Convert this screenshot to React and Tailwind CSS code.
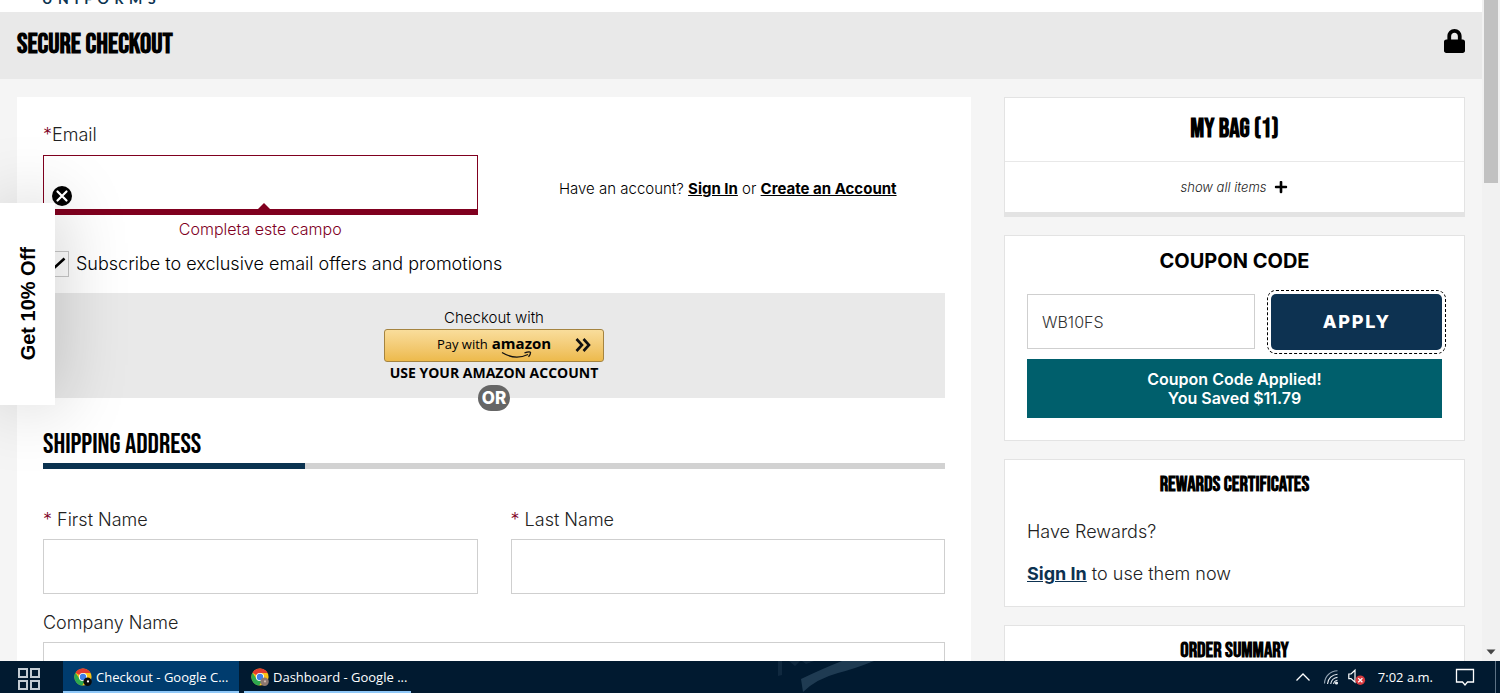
import React from "react";
import { FaLock, FaPlus } from "react-icons/fa";

const display = "font-['Bebas_Neue','Liberation_Sans_Narrow','Liberation_Sans',sans-serif]";
const card = "border border-[#e3e3e3] bg-white";
const field = "h-[55px] w-full min-w-0 rounded-none border border-[#cfcfcf] bg-white px-3.5 text-base text-[#333] outline-none";

function ChromeIcon({ badge, dot }) {
  return (
    <svg viewBox="0 0 18 18" className="size-[18px] shrink-0" aria-hidden="true">
      <circle cx="9" cy="9" r="8.6" fill="#fbc116" />
      <path d="M9 9 L1.5 4.8 A8.6 8.6 0 0 1 16.6 5 L9 5 Z" fill="#e33b2e" />
      <path d="M1.5 4.8 A8.6 8.6 0 0 0 8.2 17.6 L12 11 L9 12.9 L5.6 11 Z" fill="#2da94f" />
      <circle cx="9" cy="9" r="4.1" fill="#fff" />
      <circle cx="9" cy="9" r="3.2" fill="#3f7ee8" />
      <circle cx="13.6" cy="13.8" r="4.2" fill={badge} />
      <circle cx="14" cy="13.4" r="1.1" fill={dot} />
    </svg>
  );
}

function TaskButton({ active, badge, dot, children }) {
  return (
    <button
      type="button"
      className={
        "flex h-8 items-center gap-1 border-b-2 border-[#8fc8f8] pt-0.5 text-[13px] text-white " +
        (active ? "w-44 bg-[#003c6e] pl-[11px]" : "w-[167px] pl-[7px]")
      }
    >
      <ChromeIcon badge={badge} dot={dot} />
      <span className="whitespace-nowrap">{children}</span>
    </button>
  );
}

function Taskbar() {
  return (
    <footer className="relative z-20 flex h-8 shrink-0 items-center bg-[#011a30] font-['Segoe_UI','Open_Sans','Noto_Sans',sans-serif] font-normal text-white">
      <button type="button" aria-label="Task view" className="flex w-[63px] items-center pt-1 pl-[18px]">
        <svg viewBox="0 0 22 22" className="size-[22px]" fill="none" stroke="#c3ccd4" strokeWidth="2">
          <rect x="1" y="1" width="8" height="8" />
          <rect x="13" y="1" width="8" height="8" />
          <rect x="1" y="13" width="8" height="8" />
          <rect x="13" y="13" width="8" height="8" />
        </svg>
      </button>
      <div className="flex gap-[5px]">
        <TaskButton active badge="#0b0b0b" dot="#ffffff">Checkout - Google C...</TaskButton>
        <TaskButton badge="#8b7770" dot="#c9b8ae">Dashboard - Google ...</TaskButton>
      </div>
      <div className="flex h-8 flex-1 justify-center pr-[58px]">
        <svg viewBox="0 0 100 32" className="h-8 w-[100px]" aria-hidden="true">
          <path d="M4 0 H8 V14 L4 15 Z M15 0 L21 5 L26 0 Z M28 0 H40 L32 3 Z" fill="#10293f" />
          <path d="M27 18 Q50 7 68 0 H100 Q80 8 64 12 Q42 18 29 31 Z" fill="#1f3b52" />
        </svg>
      </div>
      <div className="flex h-8 items-center pr-1">
        <button type="button" aria-label="Show hidden icons" className="mr-3">
          <svg viewBox="0 0 16 16" className="size-4" fill="none" stroke="#fff" strokeWidth="1.3"><path d="M1.5 11.5 L8 5 L14.5 11.5" /></svg>
        </button>
        <button type="button" aria-label="Network" className="mr-2">
          <svg viewBox="0 0 16 16" className="size-4" fill="none" stroke="#e8edf2" strokeWidth="1.1">
            <path d="M1.5 14.5 A13 13 0 0 1 14.5 1.8" stroke="#93a3b2" />
            <path d="M4.5 15 A10.5 10.5 0 0 1 14.5 5.2" />
            <path d="M7.7 15 A7.5 7.5 0 0 1 14.5 8.4" />
            <path d="M10.6 15 A4.5 4.5 0 0 1 14.5 11.3" />
            <circle cx="13.5" cy="14" r="1" fill="#fff" />
          </svg>
        </button>
        <button type="button" aria-label="Volume muted" className="mr-3">
          <svg viewBox="0 0 19 18" className="h-[18px] w-[19px]" fill="none">
            <path d="M1.8 6 H4 L8 2.2 V14.2 L4 10.6 H1.8 Z" stroke="#fff" strokeWidth="1.2" />
            <circle cx="13.3" cy="12.2" r="4.8" fill="#d93a3f" />
            <path d="M11.2 10.1 L15.4 14.3 M15.4 10.1 L11.2 14.3" stroke="#fff" strokeWidth="1.3" />
          </svg>
        </button>
        <time className="mr-[22px] text-[13px] whitespace-nowrap">7:02 a.m.</time>
        <button type="button" aria-label="Notifications" className="mr-5">
          <svg viewBox="0 0 20 20" className="size-5" fill="none" stroke="#fff" strokeWidth="1.3"><path d="M1.5 2.5 H18.5 V15 H12.5 L10 18 L7.5 15 H1.5 Z" /></svg>
        </button>
        <span className="h-8 w-px bg-[#5d7285]" />
      </div>
    </footer>
  );
}

function OfferTab() {
  return (
    <aside className="absolute top-[203px] left-0 z-10 flex h-[202px] w-[55px] items-center justify-center bg-white shadow-[0_0_72px_rgba(0,0,0,0.22)]">
      <button type="button" className="rotate-180 font-['Liberation_Sans',sans-serif] text-xl font-bold whitespace-nowrap text-black [writing-mode:vertical-rl]">
        Get 10% Off
      </button>
      <button type="button" aria-label="Close offer" className="absolute -top-[17px] left-[52px]">
        <svg viewBox="0 0 20 20" className="size-5"><circle cx="10" cy="10" r="10" fill="#000" /><path d="M5.5 5.5 L14.5 14.5 M14.5 5.5 L5.5 14.5" stroke="#fff" strokeWidth="2.2" strokeLinecap="round" /></svg>
      </button>
    </aside>
  );
}

function AmazonPanel() {
  return (
    <section className="relative mt-4 flex h-[105px] flex-col items-center bg-[#e9e9e9] pt-3.5 text-black">
      <p className="text-[15px] leading-[22px] font-light">Checkout with</p>
      <button type="button" className="relative flex h-[33px] w-[220px] items-center justify-center rounded-[3px] border border-[#a58440] bg-linear-to-b from-[#f9dd9b] to-[#edba4b] pb-1 font-['Open_Sans',sans-serif] text-black">
        <span className="flex items-baseline gap-1">
          <span className="text-[13px] font-medium">Pay with</span>
          <span className="text-[15px] leading-5 font-bold">amazon</span>
        </span>
        <svg viewBox="0 0 32 8" className="absolute bottom-[2px] left-[116px] h-2 w-8" fill="none" stroke="#111" strokeWidth="1.3"><path d="M1 1.5 Q14 9.5 27 3.5 M23.5 1.8 Q29 0.3 29.5 1.5 Q29.6 3.5 27.5 5.8" /></svg>
        <svg viewBox="0 0 16 14" className="absolute top-2 right-3 h-3.5 w-4" fill="none" stroke="#111" strokeWidth="2.6"><path d="M1.5 1 L7 7 L1.5 13 M8.5 1 L14 7 L8.5 13" /></svg>
      </button>
      <p className="font-['Open_Sans',sans-serif] text-[14px] leading-[22px] font-bold">USE YOUR AMAZON ACCOUNT</p>
      <span className="absolute -bottom-[13px] flex h-[26px] w-8 items-center justify-center rounded-full bg-[#666] text-[17px] font-extrabold text-white">OR</span>
    </section>
  );
}

function Field({ id, label, required }) {
  return (
    <div>
      <label htmlFor={id} className="mb-[7px] block leading-6">
        {required && <span className="text-[#80001f]">* </span>}
        {label}
      </label>
      <input id={id} type="text" className={field} />
    </div>
  );
}

function CheckoutForm() {
  return (
    <form className="self-start bg-white px-[26px] pt-[26px] pb-10">
      <div className="grid grid-cols-2 gap-x-[33px]">
        <div>
          <label htmlFor="email" className="mb-2 block leading-6"><span className="text-[#80001f]">*</span>Email</label>
          <div className="relative">
            <input id="email" type="email" className="block h-[60px] w-full rounded-none border-x border-t border-b-[6px] border-solid border-[#80001f] bg-white px-3.5 outline-none" />
            <div className="absolute inset-x-0 bottom-[6px] flex justify-center pl-2">
              <svg viewBox="0 0 12 6" className="h-1.5 w-3"><path d="M0 6 L6 0 L12 6 Z" fill="#80001f" /></svg>
            </div>
          </div>
          <p className="mt-1 text-center text-base leading-5 text-[#80001f]">Completa este campo</p>
        </div>
        <p className="self-center pt-4 text-center text-[15px] text-black">
          Have an account? <a href="#signin" className="font-bold underline">Sign In</a> or{" "}
          <a href="#create" className="font-bold underline">Create an Account</a>
        </p>
      </div>
      <div className="mt-[11px] flex h-[27px] items-center">
        <input id="subscribe" type="checkbox" defaultChecked className="peer sr-only" />
        <label htmlFor="subscribe" className="flex items-center gap-[7px] text-black">
          <svg viewBox="0 0 26 26" className="size-[26px]"><rect x=".5" y=".5" width="25" height="25" fill="#fff" stroke="#c9c9c9" /><path d="M5 13 L10 18 L21.5 7.5" fill="none" stroke="#000" strokeWidth="2.6" /></svg>
          Subscribe to exclusive email offers and promotions
        </label>
      </div>
      <AmazonPanel />
      <h2 className={display + " mt-[33px] text-[28px] leading-7 text-black"}>SHIPPING ADDRESS</h2>
      <div className="mt-1 h-1.5 bg-[#d2d2d2]"><div className="h-full w-[29%] bg-[#0b3350]" /></div>
      <div className="mt-[39px] grid grid-cols-2 gap-x-[33px]">
        <Field id="first" label="First Name" required />
        <Field id="last" label="Last Name" required />
      </div>
      <div className="mt-[17px]"><Field id="company" label="Company Name" /></div>
    </form>
  );
}

function Sidebar() {
  return (
    <div className="flex flex-col gap-[18px]">
      <section className={card + " h-[120px] border-b-[5px]"}>
        <h2 className={display + " flex h-16 items-center justify-center border-b border-[#e8e8e8] pt-0.5 text-[26px] font-bold text-black"}>MY BAG (1)</h2>
        <button type="button" className="flex h-[50px] w-full items-center justify-center gap-2 text-[13px] italic">
          show all items <FaPlus className="size-3.5 text-black" />
        </button>
      </section>
      <section className={card + " px-[22px] pt-3 pb-[22px]"}>
        <h2 className="text-center text-xl leading-[26px] font-bold text-black">COUPON CODE</h2>
        <div className="mt-5 grid grid-cols-[minmax(0,229fr)_minmax(0,171fr)] gap-4">
          <input aria-label="Coupon code" defaultValue="WB10FS" className={field} />
          <button type="button" className="h-14 rounded-[5px] bg-[#0d3251] text-lg font-extrabold tracking-widest text-white outline-1 outline-offset-[3px] outline-black outline-dashed">APPLY</button>
        </div>
        <p className="mt-[9px] flex h-[59px] flex-col items-center justify-center bg-[#005f6c] text-base leading-[19px] font-semibold text-white">
          <span>Coupon Code Applied!</span>
          <span>You Saved $11.79</span>
        </p>
      </section>
      <section className={card + " px-[22px] pt-[13px] pb-5"}>
        <h2 className={display + " text-center text-[21px] leading-6 font-bold text-black"}>REWARDS CERTIFICATES</h2>
        <p className="mt-[23px] leading-6">Have Rewards?</p>
        <p className="mt-[18px] leading-6"><a href="#rewards" className="font-bold text-[#0d3251] underline">Sign In</a> to use them now</p>
      </section>
      <section className={card + " px-[22px] pt-[13px] pb-3"}>
        <h2 className={display + " text-center text-[21px] leading-6 font-bold text-black"}>ORDER SUMMARY</h2>
      </section>
    </div>
  );
}

export default function App() {
  return (
    <div className="flex h-screen flex-col overflow-hidden font-['Inter',sans-serif] text-lg font-light text-[#222]">
      <div className="relative flex min-h-0 flex-1 overflow-hidden">
        <div className="min-w-0 flex-1 overflow-hidden bg-[#f5f5f5]">
          <div className="flex h-3 items-end overflow-hidden bg-white pb-1.5 pl-[42px] font-['Lato',sans-serif] text-sm leading-[14px] font-bold tracking-[0.4em] text-[#0b3350]">UNIFORMS</div>
          <header className="flex h-[67px] items-start justify-between bg-[#e9e9e9] px-[17px] pt-[17px]">
            <h1 className={display + " text-[28px] leading-8 font-bold text-black"}>SECURE CHECKOUT</h1>
            <FaLock className="h-6 w-[21px] text-black" />
          </header>
          <main className="grid grid-cols-[minmax(0,954fr)_minmax(0,461fr)] gap-[33px] px-[17px] pt-[18px]">
            <CheckoutForm />
            <Sidebar />
          </main>
        </div>
        <div className="flex w-[18px] shrink-0 flex-col items-center justify-between bg-[#f1f1f1] pb-1.5" aria-hidden="true">
          <div className="h-[183px] w-3.5 bg-[#c1c1c1]" />
          <svg viewBox="0 0 10 6" className="h-1.5 w-2.5"><path d="M0.5 0.5 H9.5 L5 5.5 Z" fill="#444" /></svg>
        </div>
        <OfferTab />
      </div>
      <Taskbar />
    </div>
  );
}
